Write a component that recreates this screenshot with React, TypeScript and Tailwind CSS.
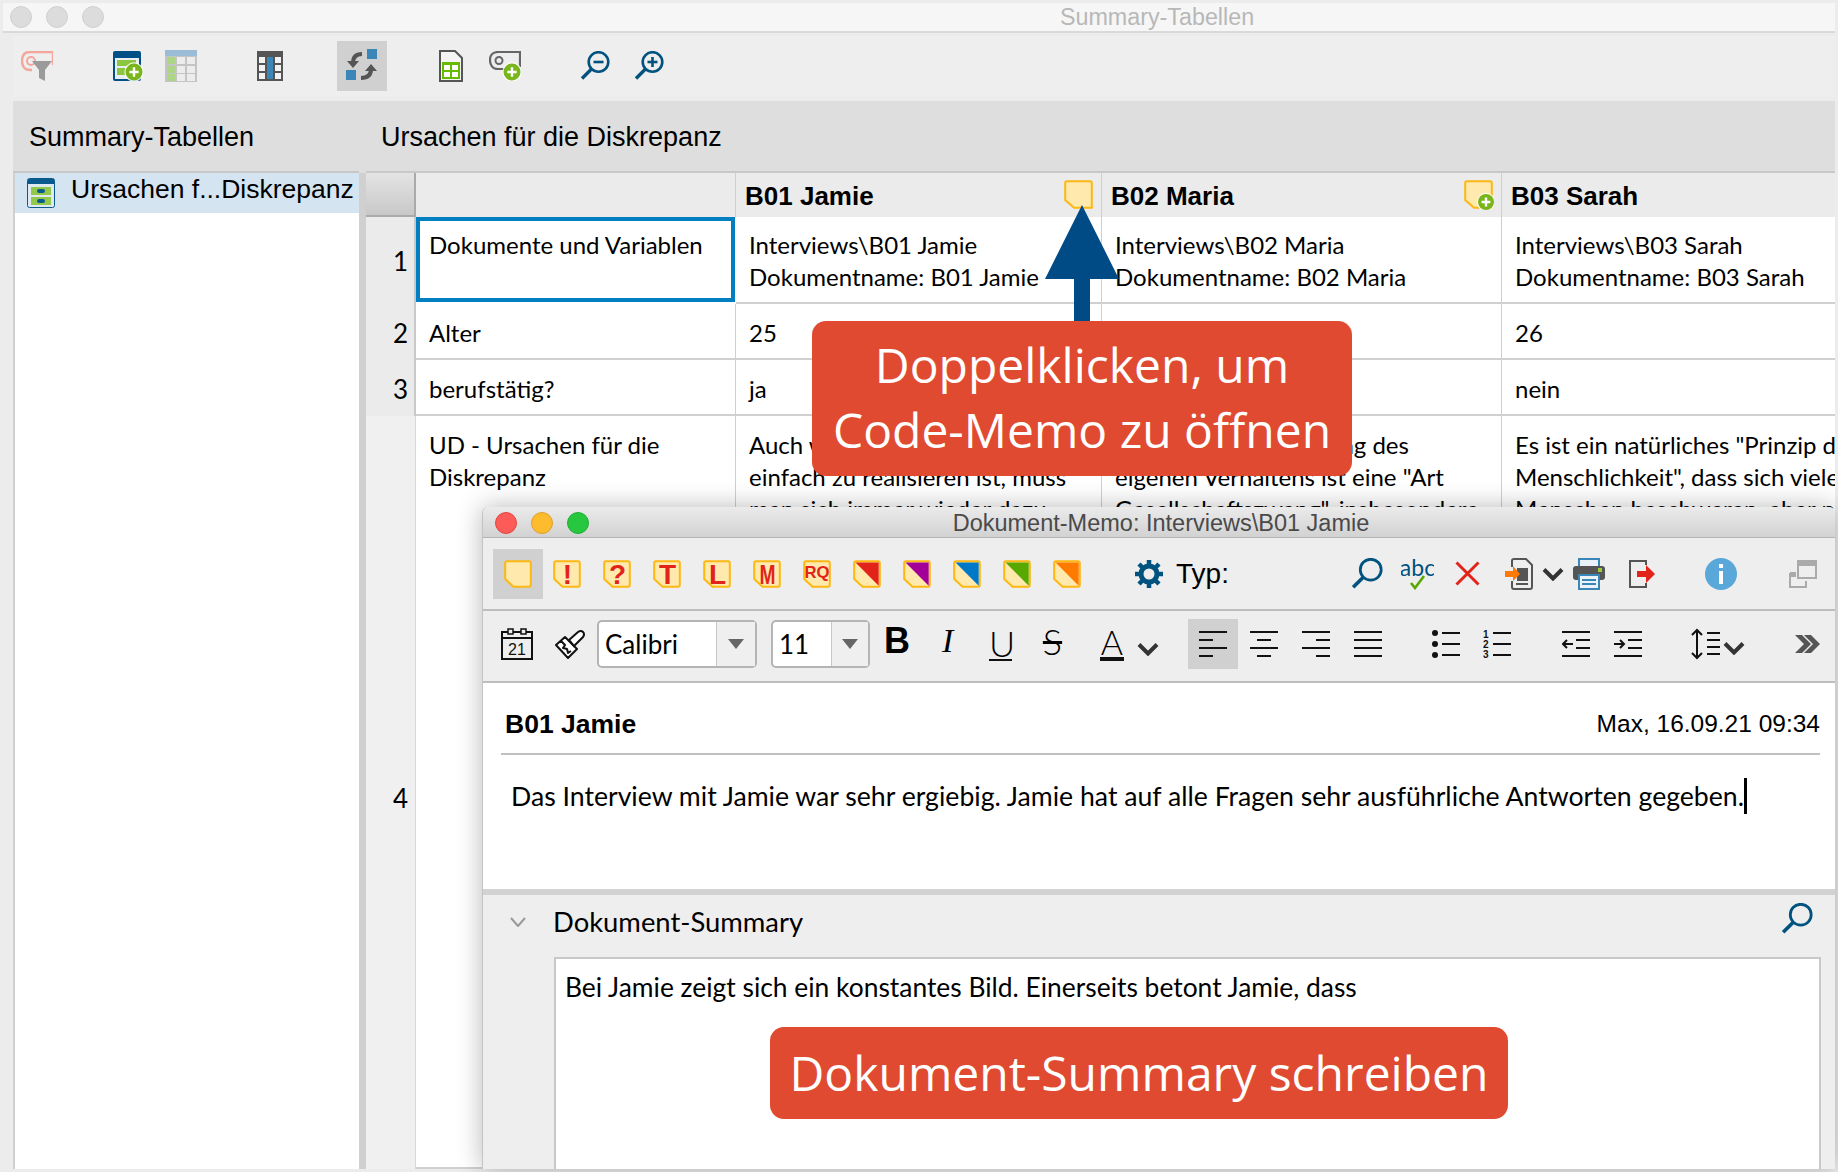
import React from "react";

const BLUE = "#00527f";

function Plus({ cx, cy, r = 9 }: { cx: number; cy: number; r?: number }) {
  return (
    <g>
      <circle cx={cx} cy={cy} r={r + 1.2} fill="#fff" opacity={0.85} />
      <circle cx={cx} cy={cy} r={r} fill="#79b51b" />
      <path d={`M${cx - r * 0.55} ${cy}H${cx + r * 0.55}M${cx} ${cy - r * 0.55}V${cy + r * 0.55}`} stroke="#fff" strokeWidth={2.4} />
    </g>
  );
}

function Note({ tri, text, small, narrow }: { tri?: string; text?: string; small?: boolean; narrow?: boolean }) {
  return (
    <svg width="28" height="28" viewBox="0 0 28 28" className="shrink-0">
      <path d="M3 1.2H25a1.8 1.8 0 0 1 1.8 1.8V25a1.8 1.8 0 0 1-1.8 1.8H9.5L1.2 19V3A1.8 1.8 0 0 1 3 1.2Z" fill="#ffe9ac" stroke="#fdb813" strokeWidth="2" strokeLinejoin="round" />
      {tri && <path d="M2.5 2.5H25.7V25.7Z" fill={tri} />}
      {text && (
        <text
          x={small ? 14 : 14.5}
          y={small ? 18 : 24}
          textAnchor="middle"
          fontFamily="'Liberation Sans',sans-serif"
          fontWeight="700"
          fontSize={small ? 17 : 28}
          fill="#e2231a"
          textLength={small ? 25 : narrow ? 16 : undefined}
          lengthAdjust={small || narrow ? "spacingAndGlyphs" : undefined}
        >
          {text}
        </text>
      )}
    </svg>
  );
}

function Search({ className = "", plus, minus, w = 30 }: { className?: string; plus?: boolean; minus?: boolean; w?: number }) {
  return (
    <svg width={w} height={w} viewBox="0 0 30 30" className={className}>
      <circle cx="18.5" cy="11" r="9.8" fill="none" stroke={BLUE} strokeWidth="2.6" />
      <path d="M11.5 18 2 27.5" stroke={BLUE} strokeWidth="3.4" />
      {(plus || minus) && <path d="M13.5 11h10" stroke={BLUE} strokeWidth="2.6" />}
      {plus && <path d="M18.5 6v10" stroke={BLUE} strokeWidth="2.6" />}
    </svg>
  );
}

function Chevron({ className = "" }: { className?: string }) {
  return (
    <svg width="22" height="14" viewBox="0 0 22 14" className={className}>
      <path d="M2 2.5 11 11.5 20 2.5" fill="none" stroke="#333" strokeWidth="4" />
    </svg>
  );
}

function Lines({ rows }: { rows: [number, number][] }) {
  return (
    <svg width="28" height="26" viewBox="0 0 28 26" className="shrink-0">
      {rows.map((r, i) => (
        <rect key={i} x={r[0]} y={i * 8} width={r[1] - r[0]} height="2" fill="#111" />
      ))}
    </svg>
  );
}

function Select({ label, w, div, ml }: { label: string; w: string; div: string; ml: string }) {
  return (
    <div className={`${w} ${ml} h-[48px] rounded-[5px] border-2 border-[#b4b4b4] bg-white flex items-center shrink-0`}>
      <span className={`${div} h-full flex items-center pl-[6px] text-[26px] font-['Lato',sans-serif] text-black`}>{label}</span>
      <span className="flex-1 h-full flex items-center justify-center border-l border-[#c8c8c8] bg-[#efefef]">
        <svg width="16" height="10" viewBox="0 0 16 10">
          <path d="M0 0H16L8 10Z" fill="#666" />
        </svg>
      </span>
    </div>
  );
}

function Cell({ lines, className = "" }: { lines: string[]; className?: string }) {
  return (
    <div className={`border-r border-[#cfcfcf] border-b-2 border-b-[#d0d0d0] pl-[13px] whitespace-nowrap overflow-hidden text-[24px] leading-[32px] ${className}`}>
      {lines.map((l, i) => (
        <div key={i}>{l}</div>
      ))}
    </div>
  );
}

function Gutter({ n, className = "" }: { n: string; className?: string }) {
  return <div className={`bg-[#ebebeb] border-r-2 border-r-[#c8c8c8] flex items-center justify-end pr-[6px] pt-[2px] text-[26px] text-black ${className}`}>{n}</div>;
}

function Head({ name, plus }: { name: string; plus?: boolean }) {
  return (
    <div className="bg-[#ebebeb] border-r border-[#cfcfcf] flex items-center justify-between pl-[9px] pr-[7px] font-['Liberation_Sans',sans-serif] font-bold text-[26px] text-black overflow-hidden whitespace-nowrap">
      <span className="pt-[2px]">{name}</span>
      <svg width="30" height="30" viewBox="0 0 30 30" className="shrink-0">
        <path d="M3 1.2H26a1.8 1.8 0 0 1 1.8 1.8V27.8H10L1.2 20V3A1.8 1.8 0 0 1 3 1.2Z" fill="#ffe9ac" stroke="#fdb813" strokeWidth="2" />
        {plus && <Plus cx={22} cy={22} r={8} />}
      </svg>
    </div>
  );
}

export default function App() {
  return (
    <div className="relative w-[1838px] h-[1172px] overflow-hidden bg-[#ececec] font-['Liberation_Sans',sans-serif] text-black">
      {/* main window */}
      <div className="flex flex-col h-[1169px]">
        <div className="h-[3px] shrink-0" />
        <div className="ml-[3px] mr-[3px] h-[30px] shrink-0 bg-[#f6f6f6] border-b-2 border-[#d9d9d9] relative flex items-center justify-center pl-[476px]">
          <span className="text-[23.3px] text-[#b8b8b8]">Summary-Tabellen</span>
          <div className="absolute left-[0px] top-0 h-full flex items-center gap-[14px] pl-[7px]">
            <span className="w-[22px] h-[22px] rounded-full bg-[#dcdcdc] border border-[#d0d0d0]" />
            <span className="w-[22px] h-[22px] rounded-full bg-[#dcdcdc] border border-[#d0d0d0]" />
            <span className="w-[22px] h-[22px] rounded-full bg-[#dcdcdc] border border-[#d0d0d0]" />
          </div>
        </div>
        <div className="h-[3px] shrink-0" />
        {/* toolbar */}
        <div className="ml-[13px] mr-[3px] h-[61px] shrink-0 bg-[#eeeeee] flex items-center pb-[2px]">
          <svg width="32" height="30" viewBox="0 0 32 30" className="ml-[8px] shrink-0">
            <path d="M32 1H9C2 1 1 6 1 10s2 9 8 9h2M32 14V1" fill="none" stroke="#f3a69b" strokeWidth="2.4" />
            <circle cx="10" cy="10" r="4" fill="none" stroke="#f3a69b" strokeWidth="2" />
            <path d="M11 10H31L24 19V30L18 27V19Z" fill="#9b9b9b" />
          </svg>
          <svg width="30" height="30" viewBox="0 0 30 30" className="ml-[60px] shrink-0">
            <rect width="28" height="30" rx="2" fill="#004f85" />
            <rect x="2" y="7" width="24" height="21" fill="#e8eff4" />
            <rect x="4" y="9" width="19" height="6" fill="#8cc63f" />
            <rect x="4" y="17" width="9" height="7" fill="#8cc63f" />
            <Plus cx={21} cy={21} r={8.5} />
          </svg>
          <svg width="32" height="32" viewBox="0 0 32 32" className="ml-[22px] shrink-0">
            <rect width="32" height="32" fill="#c4c4c4" />
            <rect width="32" height="6" fill="#9bbcd6" />
            <rect x="2" y="7" width="8" height="7" fill="#aed488" />
            <rect x="2" y="16" width="8" height="7" fill="#aed488" />
            <rect x="2" y="24" width="8" height="7" fill="#aed488" />
            {[12, 22].map((x) => [7, 16, 24].map((y) => <rect key={`${x}${y}`} x={x} y={y} width="8" height="7" fill="#ececec" />))}
          </svg>
          <svg width="26" height="30" viewBox="0 0 26 30" className="ml-[60px] shrink-0">
            <rect width="26" height="30" fill="#555" />
            {[2, 10, 18].map((x) =>
              [6, 14, 22].map((y) => <rect key={`${x}${y}`} x={x} y={y} width="6" height="6" fill={x === 10 ? "#3a87b7" : "#f2f2f2"} />)
            )}
            <rect x="10" y="6" width="6" height="22" fill="#3a87b7" />
          </svg>
          <div className="ml-[54px] w-[50px] h-[50px] bg-[#d0d0d0] flex items-center justify-center shrink-0">
            <svg width="34" height="34" viewBox="0 0 34 34">
              <rect x="22" y="0" width="10" height="10" fill="#3a87b7" />
              <rect x="1" y="21" width="10" height="10" fill="#3a87b7" />
              <path d="M17 5C10 5 8 9 8 14" fill="none" stroke="#555" strokeWidth="4" />
              <path d="M2 12H14L8 19Z" fill="#555" />
              <path d="M16 29C24 29 26 25 26 20" fill="none" stroke="#555" strokeWidth="4" />
              <path d="M20 22H32L26 15Z" fill="#555" />
            </svg>
          </div>
          <svg width="24" height="32" viewBox="0 0 24 32" className="ml-[52px] shrink-0">
            <path d="M1 1H16L23 8V31H1Z" fill="#f4f4f4" stroke="#555" strokeWidth="2" />
            <rect x="3" y="12" width="18" height="17" fill="#66bb00" />
            {[5, 13].map((x) => [15, 22].map((y) => <rect key={`${x}${y}`} x={x} y={y} width="6" height="5" fill="#fff" />))}
          </svg>
          <svg width="32" height="30" viewBox="0 0 32 30" className="ml-[26px] shrink-0">
            <path d="M32 1H9C3 1 1 5 1 9s2 9 8 9h10M31 1V16" fill="none" stroke="#666" strokeWidth="2.2" />
            <circle cx="10" cy="9.5" r="3.5" fill="none" stroke="#666" strokeWidth="2" />
            <Plus cx={23} cy={21} r={8.5} />
          </svg>
          <Search minus className="ml-[59px] shrink-0" />
          <Search plus className="ml-[24px] shrink-0" />
        </div>
        <div className="h-[4px] shrink-0" />
        {/* panes */}
        <div className="flex-1 min-h-0 ml-[13px] mr-[3px] flex">
          <div className="w-[346px] shrink-0 flex flex-col">
            <div className="h-[72px] shrink-0 bg-[#dedede] border-b-2 border-[#c8c8c8] flex items-center pl-[16px] pt-[2px] text-[27px]">Summary-Tabellen</div>
            <div className="flex-1 bg-white border-l-2 border-[#d0d0d0]">
              <div className="h-[40px] bg-[#d5e4f1] flex items-center pl-[12px] whitespace-nowrap text-[26.5px]">
                <svg width="28" height="30" viewBox="0 0 28 30" className="shrink-0">
                  <rect x="0.5" y="0.5" width="27" height="29" rx="2" fill="#dfe9f1" stroke="#0b5a8e" />
                  <rect x="1" y="1" width="26" height="5" fill="#0b5a8e" />
                  <rect x="4" y="9" width="20" height="8" fill="#93c94a" />
                  <rect x="4" y="19" width="20" height="8" fill="#93c94a" />
                  <rect x="10" y="11" width="8" height="4" rx="2" fill="#0b5a8e" />
                  <rect x="10" y="21" width="8" height="4" rx="2" fill="#0b5a8e" />
                </svg>
                <span className="ml-[16px] mb-[7px]">Ursachen f...Diskrepanz</span>
              </div>
            </div>
          </div>
          <div className="w-[7px] shrink-0 bg-[#d0d0d0] border-t-[72px] border-[#dedede]" />
          <div className="flex-1 min-w-0 flex flex-col">
            <div className="h-[72px] shrink-0 bg-[#dedede] border-b-2 border-[#c8c8c8] flex items-center pl-[15px] pt-[2px] text-[27px]">Ursachen für die Diskrepanz</div>
            <div className="flex-1 min-h-0 bg-white grid grid-cols-[50px_320px_366px_400px_333px] grid-rows-[44px_87px_56px_56px_1fr] font-['Lato',sans-serif] overflow-hidden">
              <div className="bg-gradient-to-b from-[#e4e4e4] to-[#c8c8c8] border-r-2 border-b-2 border-[#aaaaaa]" />
              <div className="bg-[#ebebeb] border-r border-[#cfcfcf]" />
              <Head name="B01 Jamie" />
              <Head name="B02 Maria" plus />
              <div className="bg-[#ebebeb] flex items-center pl-[9px] pt-[2px] font-['Liberation_Sans',sans-serif] font-bold text-[26px]">B03 Sarah</div>

              <Gutter n="1" />
              <div className="border-4 border-[#0080c0] mb-[2px] mr-[1px] pl-[9px] pt-[8px] text-[24px] leading-[32px] whitespace-nowrap">Dokumente und Variablen</div>
              <Cell className="pt-[12px]" lines={["Interviews\\B01 Jamie", "Dokumentname: B01 Jamie"]} />
              <Cell className="pt-[12px]" lines={["Interviews\\B02 Maria", "Dokumentname: B02 Maria"]} />
              <Cell className="pt-[12px] border-r-0" lines={["Interviews\\B03 Sarah", "Dokumentname: B03 Sarah"]} />

              <Gutter n="2" />
              <Cell className="pt-[13px]" lines={["Alter"]} />
              <Cell className="pt-[13px]" lines={["25"]} />
              <Cell className="pt-[13px]" lines={["31"]} />
              <Cell className="pt-[13px] border-r-0" lines={["26"]} />

              <Gutter n="3" />
              <Cell className="pt-[13px]" lines={["berufstätig?"]} />
              <Cell className="pt-[13px]" lines={["ja"]} />
              <Cell className="pt-[13px]" lines={["ja"]} />
              <Cell className="pt-[13px] border-r-0" lines={["nein"]} />

              <div className="bg-[#f0f0f0] border-r border-r-[#d8d8d8] flex items-start justify-end pr-[7px] pt-[363px] text-[26px]">4</div>
              <Cell className="pt-[13px] border-b-0" lines={["UD - Ursachen für die", "Diskrepanz"]} />
              <Cell className="pt-[13px] border-b-0" lines={["Auch wenn es nicht immer so", "einfach zu realisieren ist, muss", "man sich immer wieder dazu"]} />
              <Cell className="pt-[13px] border-b-0" lines={["Die dauernde Änderung des", "eigenen Verhaltens ist eine \"Art", "Gesellschaftszwang\", insbesondere"]} />
              <Cell className="pt-[13px] border-b-0 border-r-0" lines={["Es ist ein natürliches \"Prinzip der", "Menschlichkeit\", dass sich viele", "Menschen beschweren, aber nur"]} />
            </div>
          </div>
        </div>
      </div>

      {/* arrow */}
      <svg width="74" height="116" viewBox="0 0 74 116" className="absolute left-[1045px] top-[205px]">
        <path d="M37 0 74 74H45V116H29V74H0Z" fill="#004b85" />
      </svg>

      {/* callout 1 */}
      <div className="absolute left-[812px] top-[321px] w-[540px] h-[155px] pb-[4px] rounded-[14px] bg-[#e04a31] text-white font-['Open_Sans',sans-serif] text-[48px] leading-[65px] flex flex-col items-center justify-center">
        <span>Doppelklicken, um</span>
        <span>Code-Memo zu öffnen</span>
      </div>

      {/* memo window */}
      <div className="absolute left-[482px] top-[507px] w-[1353px] h-[662px] rounded-t-[6px] border-l border-[#c4c4c4] bg-[#eeeeee] shadow-[0_0_26px_rgba(0,0,0,0.28)] flex flex-col">
        <div className="h-[31px] shrink-0 rounded-t-[6px] bg-gradient-to-b from-[#ebebeb] to-[#d2d2d2] border-b border-[#b4b4b4] relative flex items-center justify-center pt-[3px] pl-[4px]">
          <span className="text-[23.5px] text-[#4a4a4a]">Dokument-Memo: Interviews\B01 Jamie</span>
          <div className="absolute left-[12px] top-[5px] flex gap-[14px]">
            <span className="w-[22px] h-[22px] rounded-full bg-[#fc5b57] border border-[#e2463f]" />
            <span className="w-[22px] h-[22px] rounded-full bg-[#fdbc2e] border border-[#e0a028]" />
            <span className="w-[22px] h-[22px] rounded-full bg-[#27c83f] border border-[#1eae32]" />
          </div>
        </div>
        {/* toolbar 1 */}
        <div className="h-[73px] shrink-0 border-b-2 border-[#bdbdbd] flex items-center">
          <div className="ml-[10px] w-[50px] h-[50px] bg-[#d0d0d0] flex items-center justify-center shrink-0">
            <Note />
          </div>
          <div className="ml-[10px] flex gap-[22px]">
            <Note text="!" />
            <Note text="?" />
            <Note text="T" />
            <Note text="L" />
            <Note text="M" narrow />
            <Note text="RQ" small />
            <Note tri="#e2231a" />
            <Note tri="#a3009a" />
            <Note tri="#0078c8" />
            <Note tri="#57a800" />
            <Note tri="#ff7a00" />
          </div>
          <svg width="28" height="28" viewBox="0 0 28 28" className="ml-[54px] shrink-0">
            <circle cx="14" cy="14" r="8" fill="none" stroke={BLUE} strokeWidth="5" />
            <path d="M14 0v6M14 22v6M0 14h6M22 14h6M4 4l4.5 4.5M19.5 19.5 24 24M24 4l-4.5 4.5M8.5 19.5 4 24" stroke={BLUE} strokeWidth="4.5" />
          </svg>
          <span className="ml-[13px] w-[52px] text-[28px] shrink-0">Typ:</span>
          <Search className="ml-[123px] shrink-0" w={32} />
          <svg width="33" height="32" viewBox="0 0 33 32" className="ml-[18px] shrink-0">
            <text x="16.5" y="18" textAnchor="middle" fontFamily="'Lato',sans-serif" fontSize="23" fill={BLUE}>abc</text>
            <path d="M10 25l4 5 9-12" fill="none" stroke="#5aa800" strokeWidth="2.6" />
          </svg>
          <svg width="25" height="25" viewBox="0 0 25 25" className="ml-[21px] shrink-0">
            <path d="M1.5 1.5 23.5 23.5M23.5 1.5 1.5 23.5" stroke="#e2231a" strokeWidth="3" />
          </svg>
          <svg width="28" height="32" viewBox="0 0 28 32" className="ml-[25px] shrink-0">
            <path d="M7 9V2.5Q7 1 9 1H21L27 7V29Q27 31 25 31H9Q7 31 7 29V23" fill="none" stroke="#555" strokeWidth="2" />
            <rect x="12" y="10" width="11" height="13" fill="#555" />
            <path d="M0 13H8V8L15 16 8 23V19H0Z" fill="#ff7a00" />
            <path d="M11 26H23" stroke="#555" strokeWidth="2" />
          </svg>
          <Chevron className="ml-[9px] shrink-0" />
          <svg width="32" height="32" viewBox="0 0 32 32" className="ml-[9px] shrink-0">
            <rect x="6" y="1" width="20" height="9" fill="#eaf3fa" stroke="#3a87b7" strokeWidth="2" />
            <rect x="0" y="8" width="32" height="14" rx="3" fill="#555" />
            <rect x="25" y="10" width="4" height="4" fill="#9ccc3c" />
            <rect x="6" y="17" width="20" height="14" fill="#eaf3fa" stroke="#3a87b7" strokeWidth="2" />
            <path d="M9 22H23M9 26H23" stroke="#3a87b7" strokeWidth="2" />
          </svg>
          <svg width="26" height="28" viewBox="0 0 26 28" className="ml-[24px] shrink-0">
            <path d="M17 5V1H1V27H17V23" fill="none" stroke="#555" strokeWidth="2" />
            <path d="M8 11H17V5L26 14 17 23V17H8Z" fill="#e2231a" />
          </svg>
          <svg width="32" height="32" viewBox="0 0 32 32" className="ml-[50px] shrink-0">
            <circle cx="16" cy="16" r="16" fill="#5aa7da" />
            <rect x="14" y="6" width="4" height="4" fill="#fff" />
            <rect x="14" y="13" width="4" height="13" fill="#fff" />
          </svg>
          <svg width="28" height="28" viewBox="0 0 28 28" className="ml-[52px] shrink-0">
            <rect x="9" y="1" width="18" height="17" fill="none" stroke="#aaa" strokeWidth="2" />
            <rect x="9" y="1" width="18" height="5" fill="#aaa" />
            <path d="M1 13H7M1 13V27H17V21" fill="none" stroke="#aaa" strokeWidth="2" />
            <rect x="1" y="12" width="6" height="5" fill="#aaa" />
          </svg>
        </div>
        {/* toolbar 2 */}
        <div className="h-[72px] shrink-0 border-b-2 border-[#bdbdbd] flex items-center pb-[4px]">
          <svg width="32" height="32" viewBox="0 0 32 32" className="ml-[18px] shrink-0">
            <rect x="1" y="4" width="30" height="27" fill="none" stroke="#111" strokeWidth="2" />
            <path d="M1 10H31" stroke="#111" strokeWidth="2" />
            <rect x="7" y="1" width="5" height="5" fill="#eee" stroke="#111" strokeWidth="1.5" />
            <rect x="20" y="1" width="5" height="5" fill="#eee" stroke="#111" strokeWidth="1.5" />
            <text x="16" y="27" textAnchor="middle" fontFamily="'Liberation Sans',sans-serif" fontSize="16" fill="#111">21</text>
          </svg>
          <svg width="30" height="30" viewBox="0 0 30 30" className="ml-[22px] shrink-0">
            <path d="M1 16 10 8l12 12-9 9ZM6 12l4 4-2 3 4 1 1 4 3-2" fill="#fff" stroke="#111" strokeWidth="2" strokeLinejoin="round" />
            <path d="M14 11 23 3q3-2 5 0t0 5L19 17Z" fill="#fff" stroke="#111" strokeWidth="2" />
          </svg>
          <Select label="Calibri" w="w-[160px]" div="w-[117px]" ml="ml-[12px]" />
          <Select label="11" w="w-[99px]" div="w-[58px]" ml="ml-[14px]" />
          <span className="ml-[14px] w-[26px] font-bold text-[36px] leading-none -mt-[6px] shrink-0">B</span>
          <span className="ml-[32px] w-[16px] italic text-[34px] leading-none -mt-[6px] font-['Liberation_Serif',serif] shrink-0">I</span>
          <span className="ml-[31px] w-[23px] text-center text-[36px] leading-[32px] border-b-2 border-[#111] font-['Lato',sans-serif] font-light shrink-0">U</span>
          <span className="ml-[29px] w-[23px] text-center text-[36px] leading-none -mt-[6px] line-through font-['Lato',sans-serif] font-light shrink-0">S</span>
          <span className="ml-[36px] w-[24px] text-center text-[34px] leading-[30px] border-b-4 border-[#111] font-['Lato',sans-serif] font-light shrink-0">A</span>
          <Chevron className="ml-[13px] mt-[10px] shrink-0" />
          <div className="ml-[29px] w-[50px] h-[50px] bg-[#d0d0d0] flex items-center justify-center shrink-0">
            <Lines rows={[[0, 28], [0, 14], [0, 28], [0, 14]]} />
          </div>
          <div className="ml-[12px] shrink-0 flex">
            <Lines rows={[[0, 28], [7, 21], [0, 28], [7, 21]]} />
          </div>
          <div className="ml-[24px] shrink-0 flex">
            <Lines rows={[[0, 28], [14, 28], [0, 28], [14, 28]]} />
          </div>
          <div className="ml-[24px] shrink-0 flex">
            <Lines rows={[[0, 28], [0, 28], [0, 28], [0, 28]]} />
          </div>
          <svg width="28" height="30" viewBox="0 0 28 30" className="ml-[50px] shrink-0">
            <circle cx="3" cy="4" r="3" fill="#111" />
            <circle cx="3" cy="15" r="3" fill="#111" />
            <circle cx="3" cy="26" r="3" fill="#111" />
            <path d="M10 4H28M10 15H28M10 26H28" stroke="#111" strokeWidth="2" />
          </svg>
          <svg width="28" height="30" viewBox="0 0 28 30" className="ml-[23px] shrink-0">
            <text x="0" y="9" fontFamily="'Liberation Sans',sans-serif" fontWeight="700" fontSize="10" fill="#111">1</text>
            <text x="0" y="19" fontFamily="'Liberation Sans',sans-serif" fontWeight="700" fontSize="10" fill="#111">2</text>
            <text x="0" y="29" fontFamily="'Liberation Sans',sans-serif" fontWeight="700" fontSize="10" fill="#111">3</text>
            <path d="M10 4H28M10 15H28M10 26H28" stroke="#111" strokeWidth="2" />
          </svg>
          <svg width="28" height="26" viewBox="0 0 28 26" className="ml-[51px] shrink-0">
            <path d="M0 1H28M14 9H28M14 17H28M0 25H28" stroke="#111" strokeWidth="2" />
            <path d="M11 13H1M5 9 1 13l4 4" fill="none" stroke="#111" strokeWidth="2" />
          </svg>
          <svg width="28" height="26" viewBox="0 0 28 26" className="ml-[24px] shrink-0">
            <path d="M0 1H28M14 9H28M14 17H28M0 25H28" stroke="#111" strokeWidth="2" />
            <path d="M0 13H10M6 9l4 4-4 4" fill="none" stroke="#111" strokeWidth="2" />
          </svg>
          <svg width="29" height="32" viewBox="0 0 29 32" className="ml-[49px] shrink-0">
            <path d="M6 2V30M1 7 6 2l5 5M1 25l5 5 5-5" fill="none" stroke="#111" strokeWidth="2" />
            <path d="M16 5H29M16 12H29M16 19H29M16 26H29" stroke="#111" strokeWidth="2" />
          </svg>
          <Chevron className="ml-[3px] mt-[8px] shrink-0" />
          <svg width="27" height="20" viewBox="0 0 27 20" className="ml-[49px] shrink-0">
            <path d="M1 1 10 10 1 19H8L17 10 8 1ZM10 1 19 10 10 19H17L26 10 17 1Z" fill="#555" />
          </svg>
        </div>
        {/* memo text */}
        <div className="h-[206px] shrink-0 bg-white font-['Lato',sans-serif]">
          <div className="h-[72px] ml-[18px] mr-[15px] border-b-2 border-[#c0c0c0] flex items-center justify-between pl-[4px] pt-[13px] font-['Liberation_Sans',sans-serif]">
            <span className="font-bold text-[26.5px]">B01 Jamie</span>
            <span className="text-[24.5px]">Max, 16.09.21 09:34</span>
          </div>
          <div className="mt-[23px] pl-[28px] flex items-center text-[26.63px] leading-[36px] whitespace-nowrap">
            <span>Das Interview mit Jamie war sehr ergiebig. Jamie hat auf alle Fragen sehr ausführliche Antworten gegeben.</span>
            <span className="w-[3px] h-[36px] bg-black" />
          </div>
        </div>
        <div className="h-[6px] shrink-0 bg-[#d2d2d2]" />
        {/* summary */}
        <div className="flex-1 min-h-0 flex flex-col font-['Lato',sans-serif]">
          <div className="h-[62px] shrink-0 flex items-center pb-[9px]">
            <svg width="16" height="10" viewBox="0 0 16 10" className="ml-[27px] shrink-0">
              <path d="M1 1 8 9 15 1" fill="none" stroke="#999" strokeWidth="2" />
            </svg>
            <span className="ml-[27px] text-[27.4px]">Dokument-Summary</span>
            <span className="flex-1" />
            <Search className="mr-[22px] mb-[6px] shrink-0" w={32} />
          </div>
          <div className="flex-1 ml-[71px] mr-[14px] border-2 border-b-0 border-[#c8c8c8] bg-white pl-[9px] pt-[12px] text-[26.4px] leading-[32px]">
            Bei Jamie zeigt sich ein konstantes Bild. Einerseits betont Jamie, dass
          </div>
        </div>
      </div>

      {/* callout 2 */}
      <div className="absolute left-[770px] top-[1027px] w-[738px] h-[92px] rounded-[14px] bg-[#e04a31] text-white font-['Open_Sans',sans-serif] text-[48px] flex items-center justify-center">
        Dokument-Summary schreiben
      </div>
    </div>
  );
}
